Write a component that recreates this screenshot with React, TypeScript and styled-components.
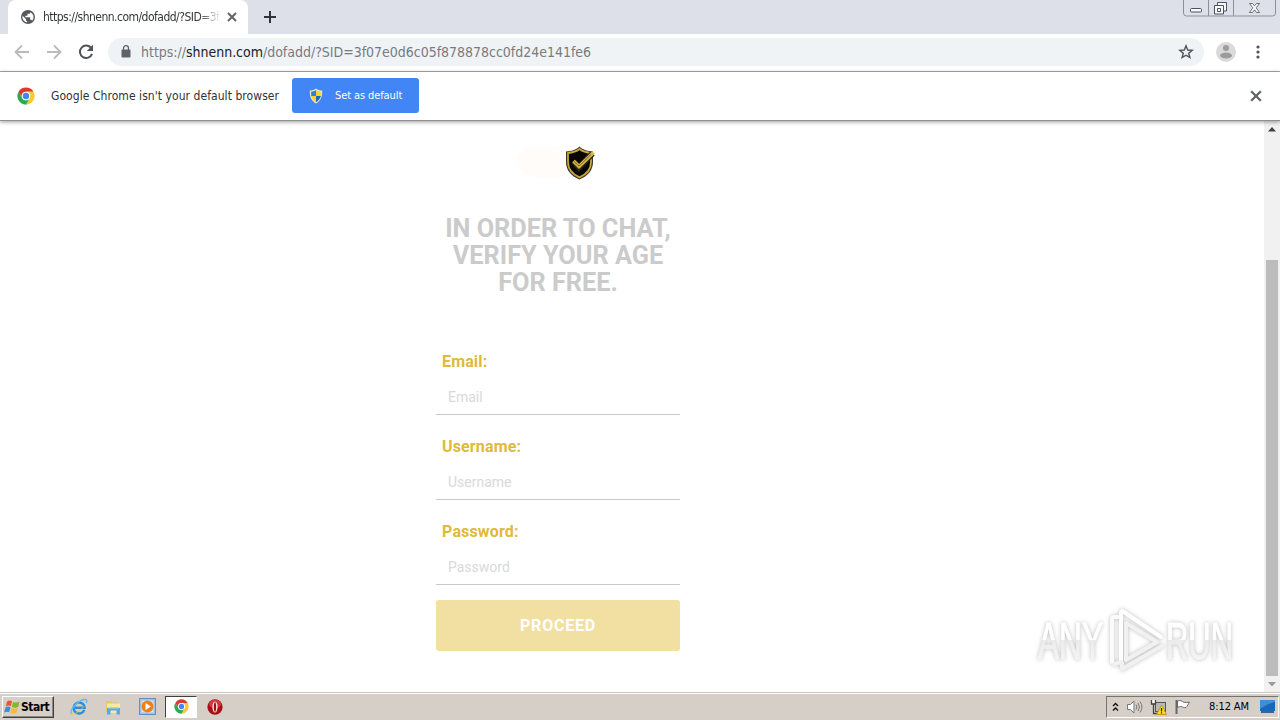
import React from 'react';
import styled, { createGlobalStyle } from 'styled-components';

const fields = ['Email', 'Username', 'Password'];

const ChromeLogo = ({ size }: { size: number }) => (
  <svg width={size} height={size} viewBox="0 0 48 48">
    <circle cx="24" cy="24" r="23" fill="#fff" />
    <path d="M4.1 12.5A23 23 0 0 1 43.9 12.5H24A11.5 11.5 0 0 0 14 29.8Z" fill="#dd3a2e" />
    <path d="M43.9 12.5A23 23 0 0 1 24 47L34 29.8A11.5 11.5 0 0 0 24 12.5Z" fill="#fcc934" />
    <path d="M24 47A23 23 0 0 1 4.1 12.5L14 29.8A11.5 11.5 0 0 0 34 29.8Z" fill="#2da94f" />
    <circle cx="24" cy="24" r="11" fill="#fff" />
    <circle cx="24" cy="24" r="8.5" fill="#4285f4" />
  </svg>
);

const Globe = () => (
  <svg width="16" height="16" viewBox="0 0 24 24" fill="#55585c">
    <path d="M12 1.5a10.5 10.5 0 1 0 0 21 10.5 10.5 0 0 0 0-21zM10.8 20.3A8.3 8.3 0 0 1 3.9 10.2L9 15.3v1a2 2 0 0 0 1.8 2zm7.4-2.6a2 2 0 0 0-1.9-1.4h-1v-3c0-.6-.4-1-1-1H8v-2h2.3c.6 0 1-.5 1-1v-2h2.2c1.1 0 2-.9 2-2v-.6a8.3 8.3 0 0 1 2.7 13z" />
  </svg>
);

const Cross = ({ size }: { size: number }) => (
  <svg width={size} height={size} viewBox="0 0 10 10">
    <path d="M1 1 9 9M9 1 1 9" stroke="#5f6368" strokeWidth="1.9" />
  </svg>
);

const Arrow = ({ flip }: { flip?: boolean }) => (
  <svg width="16" height="16" viewBox="0 0 16 16" transform={flip ? 'scale(-1 1)' : undefined}>
    <path d="M15 8H2M8 1.5 1.5 8 8 14.5" fill="none" stroke="#b9bbbe" strokeWidth="1.8" />
  </svg>
);

const Reload = () => (
  <svg width="16" height="16" viewBox="0 0 16 16">
    <path d="M13.2 4.2A6.2 6.2 0 1 0 14 9.8" fill="none" stroke="#505357" strokeWidth="2" />
    <path d="M15 .8V7H8.8Z" fill="#505357" />
  </svg>
);

const Lock = () => (
  <svg width="10" height="13" viewBox="0 0 10 13">
    <rect x=".5" y="4.5" width="9" height="8" rx="1" fill="#5f6368" />
    <path d="M2.5 5V3.2a2.5 2.5 0 0 1 5 0V5" fill="none" stroke="#5f6368" strokeWidth="1.3" />
  </svg>
);

const Star = () => (
  <svg width="16" height="16" viewBox="0 0 16 16">
    <path
      d="M8 1.800 9.700 6l4.500.3-3.500 2.900 1.200 4.400L8 11.200l-3.900 2.400 1.200-4.400L1.800 6.300 6.300 6Z"
      fill="none"
      stroke="#505357"
      strokeWidth="1.4"
    />
  </svg>
);

const Avatar = () => (
  <svg width="20" height="20" viewBox="0 0 20 20">
    <circle cx="10" cy="10" r="10" fill="#dadada" />
    <circle cx="10" cy="6" r="3" fill="#9c9c9c" />
    <ellipse cx="10" cy="13.5" rx="6" ry="3" fill="#9c9c9c" />
  </svg>
);

const UacShield = () => (
  <svg width="14" height="16" viewBox="0 0 14 16">
    <path d="M7 .5C5 2 3 2.5.8 2.5.5 9 2.5 13 7 15.500 11.500 13 13.500 9 13.200 2.500 11 2.500 9 2 7 .5Z" fill="#e8e6c8" />
    <path d="M7 2C5.500 3 4 3.500 2.200 3.700V8H7Z" fill="#2f7fd6" />
    <path d="M7 2c1.500 1 3 1.500 4.800 1.700V8H7Z" fill="#fbd32c" />
    <path d="M2.200 8C2.800 10.800 4.500 12.800 7 14.200V8Z" fill="#fbd32c" />
    <path d="M11.800 8c-.6 2.800-2.300 4.800-4.800 6.200V8Z" fill="#2467b8" />
  </svg>
);

const AgeShield = () => (
  <svg width="30" height="34" viewBox="0 0 30 34">
    <path d="M14.500.5C11 4 6 5.200 1 5.500V16c0 8 5 14 13.500 17.500C23 30 28 24 28 16V5.500C23 5.200 18 4 14.500.5Z" fill="#3b3523" />
    <path
      d="M14.500 3C11 5.800 7 6.700 3 7v9c0 7 4.300 12.200 11.500 15.300C21.700 28.200 26 23 26 16V7c-4-.3-8-1.200-11.500-4Z"
      fill="#080703"
      stroke="#c7a83a"
      strokeWidth="1.8"
    />
    <path d="m8.500 15.500 5.500 6L27.500 7.500" fill="none" stroke="#2b250e" strokeWidth="6" />
    <path d="m8.500 15 5.500 5.500L28.500 6.500" fill="none" stroke="#d9b943" strokeWidth="3.6" />
    <path d="m9 15.500 5 4.700L26 8.500" fill="none" stroke="#554615" strokeWidth=".8" />
  </svg>
);

const WindowsFlag = () => (
  <svg width="17" height="16" viewBox="0 0 17 16">
    <path d="M3 2.500C5 1 6.500 1.300 8 2.300L6.800 7.300C5 6.200 3.500 6.300 1.800 7.500Z" fill="#e9572b" />
    <path d="M9 2.700c2 1.200 4 1.200 6.500-.2l-1.300 5.200c-2 1.300-4.200 1.200-6.300 0Z" fill="#7eb82d" />
    <path d="M1.500 8.500C3.300 7.400 5 7.300 6.500 8.400L5.200 13.300C3.500 12.300 2 12.500.2 13.600Z" fill="#3f8be0" />
    <path d="M7.600 8.800c2 1.200 4 1.200 6.300 0l-1.300 5c-2 1.300-4.200 1.200-6.300 0Z" fill="#f8bd2c" />
  </svg>
);

const IeIcon = () => (
  <svg width="18" height="18" viewBox="0 0 18 18">
    <path d="M14.300 11.800A5.500 5.500 0 1 1 14.600 9.700H5" fill="none" stroke="#2b8fd8" strokeWidth="2.400" />
    <path d="M1.500 16C-1 12 8 3 14 1.500c3-.7 3.300 1.500 2 3.500" fill="none" stroke="#69b7ea" strokeWidth="1.300" />
    <path d="M1.500 16C5 17 11 12 14.500 8" fill="none" stroke="#e5c44a" strokeWidth=".8" />
  </svg>
);

const FolderIcon = () => (
  <svg width="18" height="18" viewBox="0 0 18 18">
    <path d="M2 3h5l1 1.500h7V14H2Z" fill="#e7c85e" />
    <path d="M3 5.500h13V15H3Z" fill="#f8e8a0" />
    <path d="M3 10h13v6.500h-3.500V12.500H6.500v4H3Z" fill="#5aaade" />
    <path d="M4 9h11v1.500H4Z" fill="#a9d4e9" />
  </svg>
);

const PlayerIcon = () => (
  <svg width="17" height="17" viewBox="0 0 17 17">
    <rect x=".5" y=".5" width="16" height="16" fill="#9bc3e6" stroke="#5e91c1" />
    <rect x="2.500" y="2.500" width="12" height="12" fill="#d5e8f5" />
    <circle cx="8.500" cy="8.500" r="6" fill="#ee7f1b" />
    <path d="m6.500 5 5.500 3.500-5.500 3.500Z" fill="#fff" />
  </svg>
);

const OperaIcon = () => (
  <svg width="16" height="16" viewBox="0 0 16 16">
    <ellipse cx="8" cy="8" rx="7.600" ry="7.800" fill="#a90f14" />
    <ellipse cx="8" cy="5" rx="6" ry="4.200" fill="#d03a3f" />
    <ellipse cx="8" cy="8" rx="2.600" ry="5.600" fill="#f4dede" />
    <ellipse cx="8" cy="8" rx="1.100" ry="4.800" fill="#a30d12" />
  </svg>
);

const Speaker = () => (
  <svg width="17" height="16" viewBox="0 0 17 16">
    <path d="M1.500 5.500h2.800L8 2v12l-3.700-3.500H1.500Z" fill="#fff" stroke="#777" />
    <path d="M10 5.500q1.800 2.500 0 5M12 4q3 4 0 8M14 2.500q4 5.500 0 11" fill="none" stroke="#777" />
  </svg>
);

const Network = () => (
  <svg width="17" height="16" viewBox="0 0 17 16">
    <rect x="5.500" y="3.500" width="10" height="9" fill="#b9b9b9" stroke="#555" />
    <path d="M1.500 1v4h4V1M3.500 5v9.500H8" fill="none" stroke="#444" strokeWidth="1.300" />
    <rect x="2.500" y="1" width="2" height="3" fill="#fff" />
    <path d="m11.500 6 5 9.500h-10Z" fill="#ffd923" stroke="#b89000" strokeWidth=".8" />
    <path d="M11.500 9v3.500M11.500 13.200v1.200" stroke="#332600" strokeWidth="1.200" />
  </svg>
);

const ActionFlag = () => (
  <svg width="17" height="16" viewBox="0 0 17 16">
    <path d="M2.500 1v14" stroke="#666" strokeWidth="2" />
    <path d="M3.500 2c3-1 4.500 0 6 1.200 2 .5 3.500.2 6 0-1.500 2-2 4-3.500 5.200-2 .7-3-.4-4.500-.8-1.500-.2-2.500.1-4 .9Z" fill="#fff" stroke="#666" />
  </svg>
);

const DesktopIcon = () => (
  <svg width="15" height="13" viewBox="0 0 15 13">
    <rect width="15" height="11" fill="#1767bd" />
    <path d="M0 0h15v2Q6 4 0 9Z" fill="#3d8fda" />
    <path d="M1 12h13" stroke="#163f72" strokeWidth="1.500" />
  </svg>
);

const WindowControls = () => (
  <svg width="94" height="17" viewBox="0 0 94 17">
    <path d="M.5 0v13q0 3 3 3h86q3 0 3-3V0M25.500 0v16M50.500 0v16" fill="none" stroke="#8b919c" />
    <g fill="#f8f9fb" stroke="#4c515b">
      <rect x="7.500" y="8.500" width="11" height="3.500" rx="1" />
      <path d="M34.500 2.500h9v8.500h-9Z" />
      <path d="M31.500 5.500h9v8.500h-9Z" />
      <path d="M34.500 8.500h3v3h-3Z" />
      <path d="M66.500 3.500h3l2 2.300 2-2.300h3l-3.300 4.300 3.300 4.700h-3l-2-2.700-2 2.700h-3l3.300-4.700Z" strokeWidth=".8" />
    </g>
  </svg>
);

const Watermark = () => (
  <WatermarkSvg width="210" height="76" viewBox="0 0 210 76">
    <defs>
      <linearGradient id="fade" gradientUnits="userSpaceOnUse" x1="0" y1="19" x2="0" y2="57">
        <stop offset=".46" stopColor="#fff" />
        <stop offset=".48" stopColor="#ebebeb" />
        <stop offset="1" stopColor="#f5f5f5" />
      </linearGradient>
    </defs>
    <g fill="url(#fade)" stroke="url(#fade)" fontFamily="'Liberation Sans Narrow', 'Liberation Sans', sans-serif" fontSize="52">
      <text x="8" y="56" textLength="65" lengthAdjust="spacingAndGlyphs">ANY</text>
      <text x="136" y="56" textLength="67" lengthAdjust="spacingAndGlyphs">RUN</text>
    </g>
    <g fill="none" strokeLinejoin="round" strokeLinecap="round" strokeWidth="4">
      <path d="M88 14h-4q-2 0-2 3v42" stroke="#fbfbfb" />
      <path d="M91 60V10q0-3 3-1l37 25" stroke="#fff" />
      <path d="m96 20 31 19-31 18Z" stroke="#f1f1f1" />
      <path d="m84 61 7-2M92 60v6l40-23" stroke="#f1f1f1" />
    </g>
  </WatermarkSvg>
);

const App = () => (
  <Screen>
    <GlobalStyle />
    <TabStrip>
      <Tab>
        <Globe />
        <TabTitle>https://shnenn.com/dofadd/?SID=3f</TabTitle>
        <Cross size={10} />
      </Tab>
      <NewTab>
        <svg width="12" height="12" viewBox="0 0 12 12">
          <path d="M6 0v12M0 6h12" stroke="#303338" strokeWidth="2" />
        </svg>
      </NewTab>
      <WindowControls />
    </TabStrip>
    <Toolbar>
      <Arrow />
      <Arrow flip />
      <Reload />
      <AddressBar>
        <Lock />
        <Url>
          https://<b>shnenn.com</b>/dofadd/?SID=3f07e0d6c05f878878cc0fd24e141fe6
        </Url>
        <Star />
      </AddressBar>
      <Avatar />
      <svg width="4" height="16" viewBox="0 0 4 16" fill="#505357">
        <circle cx="2" cy="3" r="1.600" />
        <circle cx="2" cy="8" r="1.600" />
        <circle cx="2" cy="13" r="1.600" />
      </svg>
    </Toolbar>
    <InfoBar>
      <ChromeLogo size={18} />
      <InfoText>Google Chrome isn't your default browser</InfoText>
      <DefaultButton>
        <UacShield />
        <span>Set as default</span>
      </DefaultButton>
      <Cross size={12} />
    </InfoBar>
    <Viewport>
      <Page>
        <LogoRow>
          <Blush />
          <AgeShield />
        </LogoRow>
        <Heading>
          <div>IN ORDER TO CHAT,</div>
          <div>VERIFY YOUR AGE</div>
          <div>FOR FREE.</div>
        </Heading>
        {fields.map((name) => (
          <Field key={name}>
            <Label htmlFor={name}>{name}:</Label>
            <Input id={name} placeholder={name} />
          </Field>
        ))}
        <Proceed>PROCEED</Proceed>
      </Page>
      <Scrollbar>
        <ScrollArrow>
          <svg width="8" height="5" viewBox="0 0 8 5">
            <path d="M4 0 8 4.500H0Z" fill="#404040" />
          </svg>
        </ScrollArrow>
        <Thumb />
        <ScrollArrow>
          <svg width="8" height="5" viewBox="0 0 8 5">
            <path d="M0 0h8L4 4.500Z" fill="#9b9b9b" />
          </svg>
        </ScrollArrow>
      </Scrollbar>
      <Watermark />
    </Viewport>
    <Taskbar>
      <StartButton>
        <WindowsFlag />
        Start
      </StartButton>
      <TaskItem><IeIcon /></TaskItem>
      <TaskItem><FolderIcon /></TaskItem>
      <TaskItem><PlayerIcon /></TaskItem>
      <TaskItem $active><ChromeLogo size={15} /></TaskItem>
      <TaskItem><OperaIcon /></TaskItem>
      <Tray>
        <svg width="7" height="10" viewBox="0 0 7 10">
          <path d="M1 4 3.500 1.500 6 4M1 8.500 3.500 6 6 8.500" fill="none" stroke="#111" strokeWidth="1.400" />
        </svg>
        <Speaker />
        <Network />
        <ActionFlag />
        <Clock>8:12 AM</Clock>
        <DesktopIcon />
      </Tray>
    </Taskbar>
  </Screen>
);

const GlobalStyle = createGlobalStyle`
  * {
    box-sizing: border-box;
  }
  body {
    margin: 0;
  }
  svg {
    display: block;
    flex-shrink: 0;
  }
`;

const Screen = styled.div`
  display: flex;
  flex-direction: column;
  width: 1280px;
  height: 720px;
  overflow: hidden;
  background: #fff;
  font-family: 'DejaVu Sans Condensed', 'DejaVu Sans', sans-serif;
  font-stretch: condensed;
`;

const TabStrip = styled.header`
  display: flex;
  align-items: flex-start;
  height: 34px;
  padding: 0 3px 0 8px;
  background: #dde0e9;
`;

const Tab = styled.div`
  display: flex;
  align-items: center;
  width: 240px;
  height: 34px;
  padding: 0 11px 0 12px;
  border-radius: 8px 8px 0 0;
  background: #fff;
`;

const TabTitle = styled.div`
  width: 178px;
  margin: 0 auto 0 7px;
  overflow: hidden;
  white-space: nowrap;
  font-size: 12px;
  letter-spacing: -0.52px;
  color: #333639;
  mask-image: linear-gradient(to right, #000 156px, transparent 178px);
`;

const NewTab = styled.div`
  margin: 11px auto 0 16px;
`;

const Toolbar = styled.div`
  display: flex;
  align-items: center;
  height: 38px;
  padding: 0 20px 2px 14px;
  border-bottom: 1px solid #a9a9a9;

  > svg {
    margin-right: 16px;
  }
  > svg:nth-last-child(2) {
    margin: 0 20px 0 12px;
  }
  > svg:last-child {
    margin: 0;
  }
`;

const AddressBar = styled.div`
  display: flex;
  align-items: center;
  flex: 1;
  height: 28px;
  margin-left: -2px;
  padding: 0 10px 0 13px;
  border-radius: 14px;
  background: #f0f3f6;
`;

const Url = styled.div`
  margin: 0 auto 0 10px;
  white-space: nowrap;
  font-size: 14px;
  letter-spacing: -0.02px;
  color: #777b80;

  b {
    font-weight: 400;
    color: #202124;
  }
`;

const InfoBar = styled.div`
  display: flex;
  align-items: center;
  height: 49px;
  padding: 0 18px 1px 17px;
  border-bottom: 1px solid #8f8f8f;
  box-shadow: 0 1px 4px rgba(0, 0, 0, 0.4);
  z-index: 1;
`;

const InfoText = styled.div`
  width: 229px;
  margin: 0 12px 0 16px;
  white-space: nowrap;
  font-size: 12px;
  letter-spacing: 0.06px;
  color: #303236;
`;

const DefaultButton = styled.div`
  display: flex;
  align-items: center;
  gap: 12px;
  width: 127px;
  height: 35px;
  margin-right: auto;
  padding-left: 17px;
  border-radius: 3px;
  background: #4285f4;
  white-space: nowrap;
  font-size: 11px;
  letter-spacing: -0.1px;
  color: #fff;
`;

const Viewport = styled.main`
  position: relative;
  display: flex;
  justify-content: space-between;
  height: 571px;
  padding-left: 436px;
`;

const Page = styled.div`
  width: 244px;
  padding-top: 25px;
  font-family: Roboto, sans-serif;
  font-stretch: normal;
`;

const LogoRow = styled.div`
  display: flex;
  height: 69px;
  padding-left: 80px;
`;

const Blush = styled.div`
  width: 49px;
  height: 32px;
  border-radius: 50% 30% 20% 60%;
  background: #fffcfa;
`;

const Heading = styled.div`
  height: 134px;
  text-align: center;
  white-space: nowrap;
  font-size: 25.3px;
  font-weight: 700;
  line-height: 27px;
  color: #cbcbcb;
`;

const Field = styled.div`
  height: 85px;
`;

const Label = styled.label`
  display: block;
  height: 31px;
  padding: 1px 0 0 6px;
  font-size: 16px;
  font-weight: 700;
  line-height: 23px;
  letter-spacing: 0.15px;
  color: #e0b93c;
`;

const Input = styled.input`
  display: block;
  width: 244px;
  height: 35px;
  padding: 0 12px;
  border: 0;
  border-bottom: 1px solid #c9c9c9;
  background: transparent;
  font-family: Roboto, sans-serif;
  font-size: 14px;

  &::placeholder {
    color: #d9d9d9;
  }
`;

const Proceed = styled.button`
  display: block;
  width: 244px;
  height: 51px;
  margin-top: -4px;
  padding: 0;
  border: 0;
  border-radius: 3px;
  background: #f2dfa2;
  font-family: Roboto, sans-serif;
  font-size: 16px;
  font-weight: 700;
  letter-spacing: 0.8px;
  color: #fff;
`;

const Scrollbar = styled.div`
  display: flex;
  flex-direction: column;
  align-items: center;
  justify-content: space-between;
  width: 16px;
  background: #f1f1f1;
`;

const ScrollArrow = styled.div`
  display: flex;
  align-items: center;
  justify-content: center;
  height: 16px;
`;

const Thumb = styled.div`
  width: 12px;
  height: 416px;
  margin: auto 0 0;
  background: #bcbcbc;
`;

const WatermarkSvg = styled.svg`
  position: absolute;
  left: 1030px;
  top: 482px;
  filter: drop-shadow(0 0 2px rgba(0, 0, 0, 0.26));
`;

const Taskbar = styled.footer`
  display: flex;
  align-items: center;
  height: 28px;
  padding: 2px 1px 2px 2px;
  border-top: 1px solid #c9c6c2;
  background: #d5cfc8;
  box-shadow: inset 0 1px #fff;
`;

const StartButton = styled.div`
  display: flex;
  align-items: center;
  width: 52px;
  height: 22px;
  margin-right: 9px;
  padding-left: 1px;
  border: 1px solid;
  border-color: #fff #404040 #404040 #fff;
  box-shadow: inset -1px -1px #8c8780;
  font-size: 12px;
  font-weight: 700;
  letter-spacing: -0.5px;
  color: #000;
`;

const TaskItem = styled.div<{ $active?: boolean }>`
  display: flex;
  align-items: center;
  justify-content: center;
  width: 32px;
  height: 22px;
  margin-right: 2px;
  border: 1px solid transparent;
  ${(props) =>
    props.$active &&
    `
    border-color: #404040 #fff #fff #404040;
    background: #fff;
  `}
`;

const Tray = styled.div`
  display: flex;
  align-items: center;
  gap: 7px;
  width: 173px;
  height: 22px;
  margin-left: auto;
  padding: 0 3px 0 5px;
  border: 1px solid;
  border-color: #77736d #fff #fff #77736d;
`;

const Clock = styled.div`
  margin: 0 auto 0 11px;
  white-space: nowrap;
  font-size: 11px;
  letter-spacing: -0.1px;
  color: #000;
`;

export default App;
